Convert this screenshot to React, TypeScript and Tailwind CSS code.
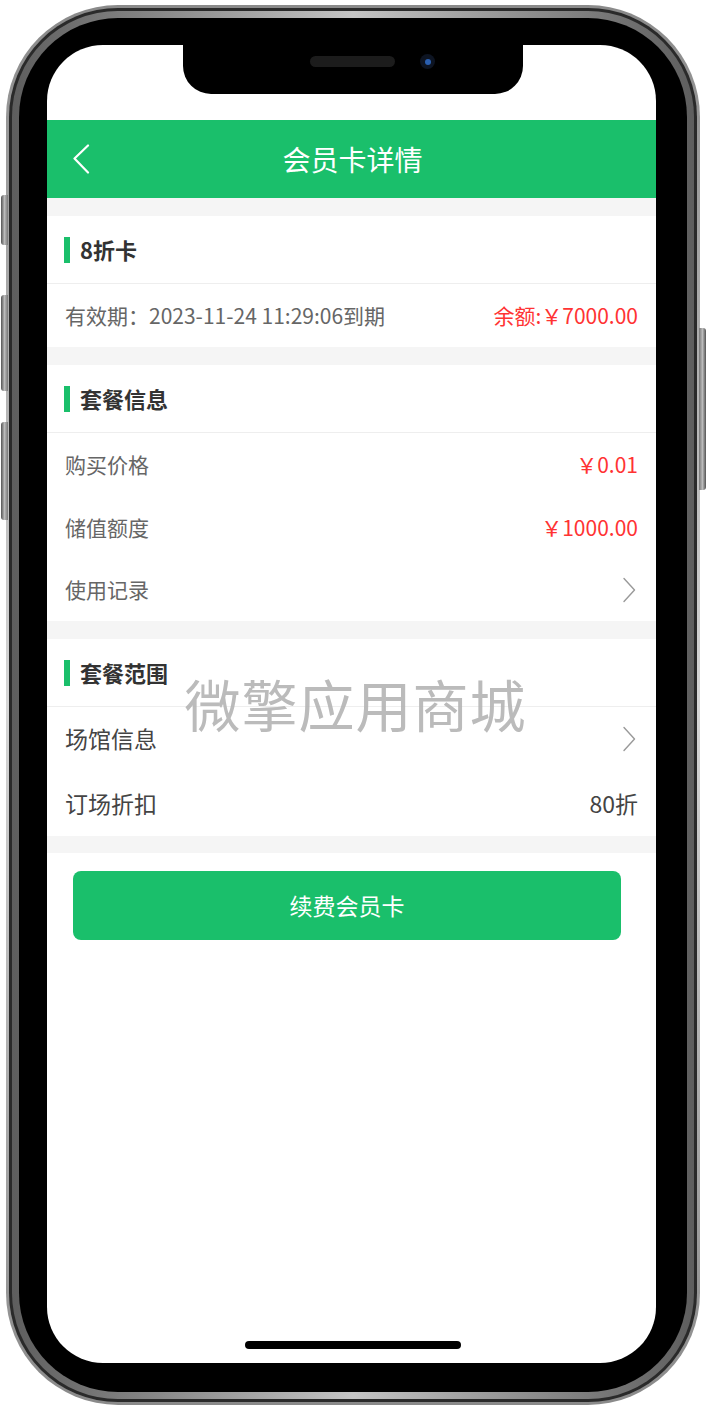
const font = { fontFamily: '"Noto Sans CJK SC", "Noto Sans", sans-serif' };

function Arrow() {
  return (
    <svg className="w-[14px] h-[26px] mr-[2px]" viewBox="0 0 14 26" fill="none">
      <path d="M2 1.5 L12.5 13 L2 24.5" stroke="#999999" strokeWidth="1.4" strokeLinecap="round" strokeLinejoin="round" />
    </svg>
  );
}

function SectionTitle({ title }: { title: string }) {
  return (
    <div className="h-[68px] flex items-center pl-[17px] border-b border-[#eeeeee]">
      <span className="w-[6px] h-[26px] bg-[#1abf6b]" />
      <span className="ml-[10px] text-[22px] font-bold text-[#333333]">{title}</span>
    </div>
  );
}

function Row({ label, value, arrow, dark, h = 'h-[63px]' }: { label: string; value?: string; arrow?: boolean; dark?: boolean; h?: string }) {
  return (
    <div className={`${h} flex items-center justify-between px-[18px]`}>
      <span className={dark ? 'text-[23px] text-[#444444]' : 'text-[21px] text-[#666666]'}>{label}</span>
      {arrow ? <Arrow /> : <span className={dark ? 'text-[23px] text-[#444444]' : 'text-[21px] text-[#ff3333]'}>{value}</span>}
    </div>
  );
}

export default function App() {
  return (
    <div className="w-[709px] h-[1414px] bg-white relative overflow-hidden" style={font}>
      {/* side buttons */}
      <div className="absolute left-[1px] top-[195px] w-[7px] h-[50px] rounded-l-[3px] bg-gradient-to-r from-[#555] via-[#bbb] to-[#777]" />
      <div className="absolute left-[1px] top-[295px] w-[7px] h-[96px] rounded-l-[3px] bg-gradient-to-r from-[#555] via-[#bbb] to-[#777]" />
      <div className="absolute left-[1px] top-[422px] w-[7px] h-[98px] rounded-l-[3px] bg-gradient-to-r from-[#555] via-[#bbb] to-[#777]" />
      <div className="absolute right-[3px] top-[328px] w-[7px] h-[162px] rounded-r-[3px] bg-gradient-to-r from-[#777] via-[#bbb] to-[#555]" />

      {/* phone body */}
      <div className="ml-[6px] mt-[5px] w-[694px] h-[1400px] rounded-[112px] p-[3px] bg-gradient-to-b from-[#8a8a8a] via-[#d6d6d6] to-[#8a8a8a]">
        <div className="w-full h-full rounded-[109px] p-[3px] bg-[#2a2a2a]">
          <div className="w-full h-full rounded-[106px] p-[7px] bg-gradient-to-r from-[#5e5e5e] via-[#c4c4c4] to-[#5e5e5e]">
            <div className="w-full h-full rounded-[99px] bg-black pl-[28px] pt-[27px] pr-[31px] pb-[29px]">
              {/* screen */}
              <div className="w-[609px] h-[1318px] rounded-[56px] bg-white overflow-hidden relative flex flex-col">
                <div className="h-[75px] shrink-0" />
                {/* header */}
                <div className="h-[78px] shrink-0 bg-[#1abf6b] flex items-center relative">
                  <svg className="ml-[25px] w-[18px] h-[30px]" viewBox="0 0 18 30" fill="none">
                    <path d="M16 1.5 L2.5 14.5 L16 28.5" stroke="white" strokeWidth="2.2" strokeLinecap="round" strokeLinejoin="round" />
                  </svg>
                  <div className="absolute inset-0 flex items-center justify-center text-[28px] text-white pl-[2px]">会员卡详情</div>
                </div>

                {/* content */}
                <div className="bg-[#f5f5f5] pt-[18px] pb-[17px] flex flex-col gap-[18px]">
                  <div className="bg-white">
                    <SectionTitle title="8折卡" />
                    <div className="h-[63px] flex items-center justify-between px-[18px]">
                      <span className="text-[21px] text-[#666666]">有效期：2023-11-24 11:29:06到期</span>
                      <span className="text-[21px] text-[#ff3333]">余额:￥7000.00</span>
                    </div>
                  </div>
                  <div className="bg-white">
                    <SectionTitle title="套餐信息" />
                    <Row label="购买价格" value="￥0.01" />
                    <Row label="储值额度" value="￥1000.00" />
                    <Row label="使用记录" arrow h="h-[62px]" />
                  </div>
                  <div className="bg-white">
                    <SectionTitle title="套餐范围" />
                    <Row label="场馆信息" arrow dark />
                    <div className="h-[66px] flex items-center justify-between px-[18px]">
                      <span className="text-[23px] text-[#444444]">订场折扣</span>
                      <span className="text-[23px] text-[#444444]">80折</span>
                    </div>
                  </div>
                </div>

                <div className="px-[26px] pt-[18px]">
                  <button className="w-[548px] h-[69px] rounded-[8px] bg-[#1abf6b] text-white text-[23px]">续费会员卡</button>
                </div>

                {/* watermark */}
                <div className="absolute left-0 right-0 top-[616px] flex justify-center pl-[8px] text-[56px] text-[#b4b4b4] opacity-90 tracking-[1px] pointer-events-none">
                  微擎应用商城
                </div>

                {/* notch */}
                <div className="absolute left-[136px] top-0 w-[340px] h-[49px] bg-black rounded-b-[28px]">
                  <div className="absolute left-[127px] top-[11px] w-[85px] h-[11px] rounded-full bg-[#1c1c1c]" />
                  <div className="absolute left-[237px] top-[9px] w-[15px] h-[15px] rounded-full bg-[#0d1422] flex items-center justify-center">
                    <div className="w-[6px] h-[6px] rounded-full bg-[#2a5fb0]" />
                  </div>
                </div>

                {/* home indicator */}
                <div className="absolute left-[198px] bottom-[14px] w-[216px] h-[8px] rounded-full bg-black" />
              </div>
            </div>
          </div>
        </div>
      </div>
    </div>
  );
}
